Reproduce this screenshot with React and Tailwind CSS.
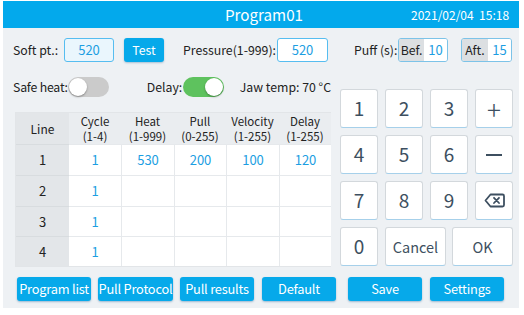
import { useState, Fragment } from 'react'

const font = { fontFamily: '"Noto Sans CJK SC", "Noto Sans", sans-serif' }

const headers = [
  ['Cycle', '(1-4)'],
  ['Heat', '(1-999)'],
  ['Pull', '(0-255)'],
  ['Velocity', '(1-255)'],
  ['Delay', '(1-255)'],
]

const rows = [
  ['1', '530', '200', '100', '120'],
  ['1', '', '', '', ''],
  ['1', '', '', '', ''],
  ['1', '', '', '', ''],
]

const Toggle = ({ on, onClick }) => (
  <button
    onClick={onClick}
    className={`relative shrink-0 w-[41px] h-[20px] rounded-full ${on ? 'bg-[#5ec25e]' : 'bg-[#cbcbcb]'}`}
  >
    <span
      className={`absolute top-[1px] w-[18px] h-[18px] rounded-full bg-white shadow-[0_1px_2px_rgba(0,0,0,0.35)] ${on ? 'left-[22px]' : 'left-[1px]'}`}
    />
  </button>
)

const Key = ({ children, className = '' }) => (
  <button
    className={`h-[39px] bg-white rounded-[3px] border border-[#d3d8dc] border-b-[#a6d0ea] flex items-center justify-center text-[#3d4f60] ${className}`}
  >
    {children}
  </button>
)

const BlueBtn = ({ children, className = '' }) => (
  <button
    className={`h-[24px] w-[74px] bg-[#06a9ea] text-white rounded-[3px] text-[12.8px] tracking-[-0.2px] whitespace-nowrap overflow-hidden shadow-[0_1px_2px_rgba(0,80,140,0.35)] flex items-center justify-center ${className}`}
  >
    {children}
  </button>
)

const Backspace = () => (
  <svg width="21" height="15" viewBox="0 0 21 15" fill="none" stroke="#3d4f60" strokeWidth="1.8" strokeLinejoin="round">
    <path d="M6.5 1.5H18.5a1.5 1.5 0 0 1 1.5 1.5v9a1.5 1.5 0 0 1-1.5 1.5H6.5L1.5 7.5Z" />
    <path d="M10 4.8l5 5.2M15 4.8l-5 5.2" strokeLinecap="round" />
  </svg>
)

export default function App() {
  const [safeHeat, setSafeHeat] = useState(false)
  const [delay, setDelay] = useState(true)

  return (
    <div className="w-[524px] h-[315px] bg-white pl-[3px] pt-[1px]" style={font}>
      <div className="w-[516px] h-[307px] bg-[#eef1f4] flex flex-col">
        {/* header */}
        <div className="h-[27px] bg-[#03a9ec] flex items-center text-white relative shrink-0">
          <div className="flex-1 text-center text-[15.2px] pl-[6px]">Program01</div>
          <div className="absolute left-[408px] top-[5px] text-[12px] whitespace-nowrap">2021/02/04&nbsp;&nbsp;15:18</div>
        </div>

        {/* top row */}
        <div className="flex items-center h-[24px] mt-[10px] text-[12.3px] text-[#222] whitespace-nowrap">
          <span className="ml-[10px] w-[51px]">Soft pt.:</span>
          <div className="w-[50px] h-[24px] rounded-[3px] border border-[#56bdf0] bg-[#eaf6fd] flex items-center justify-center text-[#1c9ee2] text-[13px]">520</div>
          <button className="ml-[10px] w-[40px] h-[24px] rounded-[3px] bg-[#06a9ea] text-white shadow-[0_1px_2px_rgba(0,80,140,0.3)]">Test</button>
          <span className="ml-[19px] w-[94px]">Pressure(1-999):</span>
          <div className="w-[51px] h-[24px] rounded-[3px] border border-[#56bdf0] bg-white flex items-center justify-center text-[#1c9ee2] text-[13px]">520</div>
          <span className="ml-[26px] w-[44px]">Puff (s):</span>
          <div className="w-[50px] h-[24px] rounded-[3px] border border-[#7cc3e8] flex overflow-hidden">
            <div className="w-[25px] bg-[#dcdfe2] flex items-center justify-center">Bef.</div>
            <div className="flex-1 bg-white flex items-center justify-center text-[#1c9ee2] text-[13px]">10</div>
          </div>
          <div className="ml-[13px] w-[51px] h-[24px] rounded-[3px] border border-[#7cc3e8] flex overflow-hidden">
            <div className="w-[26px] bg-[#dcdfe2] flex items-center justify-center">Aft.</div>
            <div className="flex-1 bg-white flex items-center justify-center text-[#1c9ee2] text-[13px]">15</div>
          </div>
        </div>

        {/* middle */}
        <div className="flex mt-[15px]">
          <div className="ml-[10px] w-[318px]">
            <div className="flex items-center h-[20px] text-[12.3px] text-[#222] whitespace-nowrap">
              <span className="w-[56px] tracking-[-0.2px]">Safe heat:</span>
              <Toggle on={safeHeat} onClick={() => setSafeHeat(!safeHeat)} />
              <span className="ml-[38px] w-[38px]">Delay:</span>
              <Toggle on={delay} onClick={() => setDelay(!delay)} />
              <span className="ml-[16px]">Jaw temp: 70 °C</span>
            </div>

            <div className="ml-[2px] mt-[15px] w-[316px] border border-[#e2e5e8] grid grid-cols-[53px_52px_53px_52px_53px_52px] grid-rows-[31px_31px_31px_30px_30px]">
              <div className="bg-[#e3e6e9] flex items-center justify-center text-[12px] text-[#222]">Line</div>
              {headers.map(([a, b]) => (
                <div key={a} className="bg-[#eaedf0] flex flex-col items-center justify-center text-[11.5px] leading-[15px] text-[#222] whitespace-nowrap">
                  <span className="block h-[14px] leading-[14px]">{a}</span>
                  <span className="block h-[14px] leading-[14px] mt-[1px]">{b}</span>
                </div>
              ))}
              {rows.map((r, i) => (
                <Fragment key={i}>
                  <div className="bg-[#e3e6e9] border-t border-[#d8dcdf] flex items-center justify-center text-[13px] text-[#222]">{i + 1}</div>
                  {r.map((v, j) => (
                    <div key={j} className={`bg-white border-t border-[#e6e9ec] ${j > 0 ? 'border-l' : ''} flex items-center justify-center text-[13px] text-[#1c9ee2]`}>{v}</div>
                  ))}
                </Fragment>
              ))}
            </div>
          </div>

          <div className="ml-[9px] mt-[12px] flex flex-col gap-[7px] text-[19px]">
            <div className="flex gap-[7px]">
              <Key className="w-[38px]">1</Key>
              <Key className="w-[38px]">2</Key>
              <Key className="w-[38px]">3</Key>
              <Key className="w-[38px] text-[26px] font-light">+</Key>
            </div>
            <div className="flex gap-[7px]">
              <Key className="w-[38px]">4</Key>
              <Key className="w-[38px]">5</Key>
              <Key className="w-[38px]">6</Key>
              <Key className="w-[38px]"><span className="block w-[16px] h-[2px] bg-[#3d4f60]" /></Key>
            </div>
            <div className="flex gap-[7px]">
              <Key className="w-[38px]">7</Key>
              <Key className="w-[38px]">8</Key>
              <Key className="w-[38px]">9</Key>
              <Key className="w-[38px]"><Backspace /></Key>
            </div>
            <div className="flex gap-[7px]">
              <Key className="w-[38px]">0</Key>
              <Key className="w-[61px] text-[14.5px]">Cancel</Key>
              <Key className="w-[61px] text-[14.5px] ml-[-1px]">OK</Key>
            </div>
          </div>
        </div>

        {/* bottom buttons */}
        <div className="flex mt-[10px] ml-[14px]">
          <BlueBtn>Program list</BlueBtn>
          <BlueBtn className="ml-[7px] w-[75px]">Pull Protocol</BlueBtn>
          <BlueBtn className="ml-[7px]">Pull results</BlueBtn>
          <BlueBtn className="ml-[8px]">Default</BlueBtn>
          <BlueBtn className="ml-[12px]">Save</BlueBtn>
          <BlueBtn className="ml-[8px]">Settings</BlueBtn>
        </div>
      </div>
    </div>
  )
}
